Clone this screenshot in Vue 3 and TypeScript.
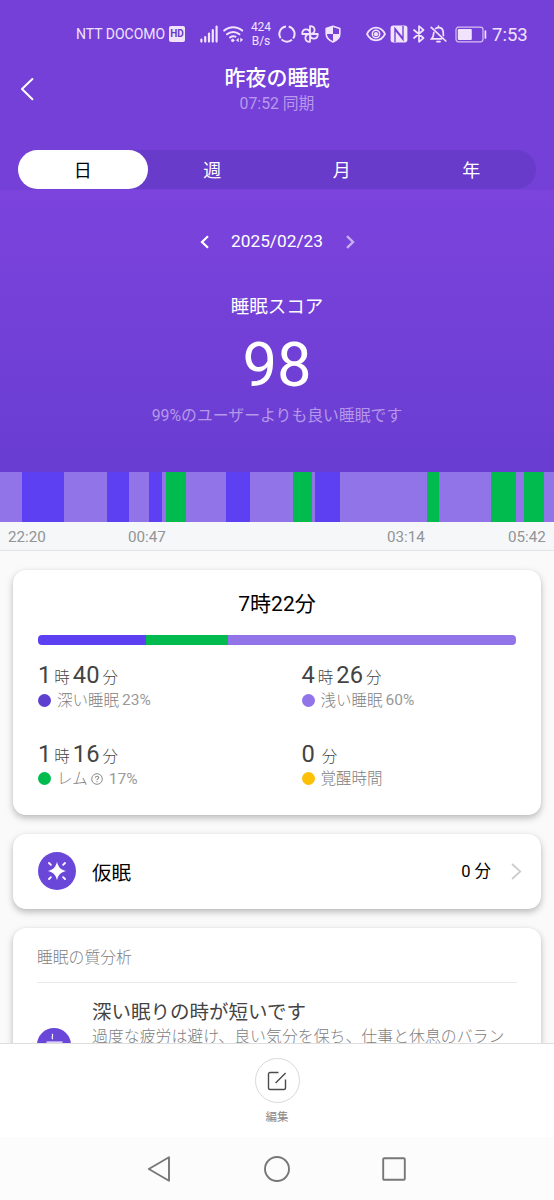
<script setup lang="ts">
type Stage = 'deep' | 'light' | 'rem'

interface Segment {
  stage: Stage
  size: number
}

interface Stat {
  parts: { value: string; unit: string }[]
  label: string
  help?: boolean
  percent?: string
  tone: string
}

const segments: Segment[] = [
  { stage: 'light', size: 22.4 },
  { stage: 'deep', size: 41.6 },
  { stage: 'light', size: 42.8 },
  { stage: 'deep', size: 22.4 },
  { stage: 'light', size: 20.2 },
  { stage: 'deep', size: 12.6 },
  { stage: 'light', size: 3.6 },
  { stage: 'rem', size: 20.2 },
  { stage: 'light', size: 40.4 },
  { stage: 'deep', size: 23.8 },
  { stage: 'light', size: 42.6 },
  { stage: 'rem', size: 19 },
  { stage: 'light', size: 3.8 },
  { stage: 'deep', size: 25 },
  { stage: 'light', size: 86.6 },
  { stage: 'rem', size: 11.6 },
  { stage: 'light', size: 52.4 },
  { stage: 'rem', size: 25.5 },
  { stage: 'light', size: 7.2 },
  { stage: 'rem', size: 20.5 },
  { stage: 'light', size: 9.8 },
]

const totals: Segment[] = [
  { stage: 'deep', size: 108 },
  { stage: 'rem', size: 82.5 },
  { stage: 'light', size: 288 },
]

const stats: Stat[] = [
  { parts: [{ value: '1', unit: '時' }, { value: '40', unit: '分' }], label: '深い睡眠', percent: '23%', tone: 'dot-deep' },
  { parts: [{ value: '4', unit: '時' }, { value: '26', unit: '分' }], label: '浅い睡眠', percent: '60%', tone: 'dot-light' },
  { parts: [{ value: '1', unit: '時' }, { value: '16', unit: '分' }], label: 'レム', help: true, percent: '17%', tone: 'dot-rem' },
  { parts: [{ value: '0', unit: '分' }], label: '覚醒時間', tone: 'dot-awake' },
]

const tabs = ['日', '週', '月', '年']
</script>

<template>
  <div class="screen">
    <header class="top">
      <div class="status">
        <span class="carrier">NTT DOCOMO</span>
        <span class="hd">HD</span>
        <svg class="signal" width="18" height="18" viewBox="0 0 18 18">
          <path d="M1.4 14.6v2M5.2 12v4.6M9 8.6v8M12.8 5.2v11.4M16.6 1.6v15" stroke="#f1e3fb" stroke-width="2.2" stroke-linecap="round" />
        </svg>
        <svg class="wifi" width="21" height="18" viewBox="0 0 21 18" fill="none" stroke="#f1e3fb" stroke-width="2" stroke-linecap="round">
          <path d="M1.2 5.6a13.5 13.5 0 0 1 18 0M4 9.3a9.4 9.4 0 0 1 12.4 0M7 12.4a5.3 5.3 0 0 1 5.4-.8" />
          <circle cx="9.7" cy="15.4" r="1.2" fill="#f1e3fb" stroke-width="1" />
          <path d="M15.7 12.7 13 15.2l2.7 2zM17.3 12.7v4.5l2.8-2.4z" fill="#f1e3fb" stroke="none" />
        </svg>
        <span class="speed"><span>424</span><span>B/s</span></span>
        <svg class="ring" width="18" height="18" viewBox="0 0 18 18" fill="none" stroke="#f1e3fb" stroke-width="2">
          <path d="M10.7 1.5a7.7 7.7 0 0 1 4.4 12M14 14.8a7.7 7.7 0 0 1-10.5-.4M2.6 13.2A7.7 7.7 0 0 1 8 1.4" />
        </svg>
        <svg class="fan" width="18" height="18" viewBox="0 0 18 18" fill="none" stroke="#f1e3fb" stroke-width="1.8" stroke-linejoin="round">
          <path d="M9 9V1.2c3.2 0 4.6 1.8 4.6 3.9S12 9 9 9ZM9 9h7.8c0 3.2-1.8 4.6-3.9 4.6S9 12 9 9ZM9 9v7.8c-3.2 0-4.6-1.8-4.6-3.9S6 9 9 9ZM9 9H1.2c0-3.2 1.8-4.6 3.900-4.6S9 6 9 9Z" />
        </svg>
        <svg class="shield" width="16" height="18" viewBox="0 0 16 18">
          <path d="M8 1.2 14.8 3.6v5.2c0 3.6-2.6 6.5-6.8 8.1C3.8 15.3 1.2 12.4 1.2 8.8V3.6Z" fill="none" stroke="#f1e3fb" stroke-width="1.6" stroke-linejoin="round" />
          <path d="M8 1.2V9H1.2V3.6ZM8 9h6.6c-.2 3.4-2.9 6.3-6.6 7.9Z" fill="#f1e3fb" />
        </svg>
        <svg class="eye" width="20" height="16" viewBox="0 0 20 16" fill="none" stroke="#f1e3fb">
          <path d="M1 8C3 4 6.2 1.7 10 1.7S17 4 19 8c-2 4-5.2 6.3-9 6.3S3 12 1 8Z" stroke-width="1.7" />
          <circle cx="10" cy="8" r="3.7" stroke-width="1.5" />
          <circle cx="10" cy="8.2" r="2.1" fill="#f1e3fb" stroke="none" />
        </svg>
        <svg class="nfc" width="18" height="18" viewBox="0 0 18 18">
          <rect x=".6" y=".6" width="16.8" height="16.8" rx="2.6" fill="#f1e3fb" />
          <path d="M5 17V3.6L12.6 13M13 1v13.4L5.4 5" fill="none" stroke="#7440d8" stroke-width="1.4" />
        </svg>
        <svg class="bt" width="12" height="18" viewBox="0 0 12 18" fill="none" stroke="#f1e3fb" stroke-width="1.7" stroke-linejoin="round" stroke-linecap="round">
          <path d="M1 5l9.500 8L6 16.8V1.2L10.5 5 1 13" />
        </svg>
        <svg class="bell" width="17" height="18" viewBox="0 0 17 18" fill="none" stroke="#f1e3fb" stroke-width="1.7" stroke-linecap="round">
          <path d="M1.2 2.4 15.8 16M3.8 7.5c-.1 3.2-.4 4.6-2.2 6.3h9.800M5.6 3.6C6.4 3 7.2 2.7 8.5 2.7c3 0 4.6 1.9 4.700 4.6l.2 3.4M8.5 1v1.5" />
          <path d="M7 16.7h3" />
        </svg>
        <svg class="battery" width="32" height="17" viewBox="0 0 32 17">
          <rect x="1" y="1.2" width="27" height="14.6" rx="2.5" fill="none" stroke="#d9bff4" stroke-width="1.2" />
          <rect x="2.8" y="3" width="14" height="11" rx="1" fill="#f1e3fb" />
          <path d="M30.4 5v7" stroke="#f1e3fb" stroke-width="1.7" stroke-linecap="round" />
        </svg>
        <span class="clock">7:53</span>
      </div>

      <div class="title-bar">
        <svg class="back" width="14" height="24" viewBox="0 0 14 24" fill="none" stroke="#fff" stroke-width="2" stroke-linecap="round" stroke-linejoin="round">
          <path d="M12.4 2 2 12l10.4 10.3" />
        </svg>
        <div class="titles">
          <h1>昨夜の睡眠</h1>
          <p>07:52 同期</p>
        </div>
      </div>

      <nav class="tabs">
        <span v-for="(tab, i) in tabs" :key="tab" class="tab" :class="{ active: i === 0 }">{{ tab }}</span>
      </nav>
    </header>

    <section class="score">
      <div class="date">
        <svg width="10" height="14" viewBox="0 0 10 14" fill="none" stroke="#fff" stroke-width="2.2"><path d="M8 1.2 2 7l6 5.8" /></svg>
        <span>2025/02/23</span>
        <svg width="10" height="14" viewBox="0 0 10 14" fill="none" stroke="#c9aef0" stroke-width="2.4"><path d="M2 1.2 8 7l-6 5.8" /></svg>
      </div>
      <p class="score-label">睡眠スコア</p>
      <p class="score-value">98</p>
      <p class="score-note">99%のユーザーよりも良い睡眠です</p>
    </section>

    <div class="chart">
      <span v-for="(s, i) in segments" :key="i" :class="s.stage" :style="{ flexGrow: s.size }"></span>
    </div>
    <div class="axis">
      <span>22:20</span>
      <span class="t2">00:47</span>
      <span class="t3">03:14</span>
      <span class="t4">05:42</span>
    </div>

    <main class="content">
      <section class="card summary">
        <h2>7時22分</h2>
        <div class="total">
          <span v-for="t in totals" :key="t.stage" :class="t.stage" :style="{ flexGrow: t.size }"></span>
        </div>
        <div class="stats">
          <div v-for="s in stats" :key="s.label" class="stat">
            <div class="amount" :class="{ single: s.parts.length === 1 }">
              <template v-for="p in s.parts" :key="p.unit"><b>{{ p.value }}</b><i>{{ p.unit }}</i></template>
            </div>
            <div class="legend">
              <span class="dot" :class="s.tone"></span>
              <span class="name">{{ s.label }}</span>
              <svg v-if="s.help" class="help" width="12" height="12" viewBox="0 0 12 12" fill="none" stroke="#8c8c8c">
                <circle cx="6" cy="6" r="5.3" />
                <path d="M4.4 4.8c0-2.1 3.3-2.1 3.3-.1C7.7 5.9 6 5.8 6 7.2M6 8.2v1.1" stroke-width="1.1" />
              </svg>
              <span v-if="s.percent" class="pct">{{ s.percent }}</span>
            </div>
          </div>
        </div>
      </section>

      <section class="card nap">
        <svg width="38" height="38" viewBox="0 0 38 38">
          <circle cx="19" cy="19" r="19" fill="#6a47d9" />
          <path d="M19 9.8c1.4 5.6 3.6 7.8 9.2 9.2-5.6 1.4-7.8 3.6-9.2 9.2-1.4-5.6-3.6-7.8-9.2-9.2 5.6-1.4 7.8-3.6 9.2-9.2Z" fill="#fff" />
          <path d="M11 11l1.9 1.9M27 11l-1.9 1.9M11 27l1.9-1.9M27 27l-1.9-1.9" stroke="#fff" stroke-width="1.8" stroke-linecap="round" />
        </svg>
        <span class="nap-name">仮眠</span>
        <span class="nap-value">0 分</span>
        <svg width="11" height="17" viewBox="0 0 11 17" fill="none" stroke="#ccc" stroke-width="1.7"><path d="M1 1l8.300 7.5L1 16" /></svg>
      </section>

      <section class="card analysis">
        <h3>睡眠の質分析</h3>
        <div class="advice">
          <svg width="34" height="34" viewBox="0 0 34 34">
            <circle cx="17" cy="17" r="17" fill="#6a47d9" />
            <path d="M15 6c2.200 1.600-1.400 2.600.8 5.200M9.500 14.200h16" fill="none" stroke="#fff" stroke-width="1.2" />
          </svg>
          <div>
            <h4>深い眠りの時が短いです</h4>
            <p>過度な疲労は避け、良い気分を保ち、仕事と休息のバラン</p>
          </div>
        </div>
      </section>
    </main>

    <footer class="actions">
      <span class="edit">
        <svg width="20" height="20" viewBox="0 0 20 20" fill="none" stroke="#4c4c4c" stroke-width="1.4">
          <path d="M11.5 1.5H3A1.5 1.5 0 0 0 1.5 3v14A1.5 1.5 0 0 0 3 18.5h14a1.5 1.5 0 0 0 1.5-1.5V8.500M8.6 12 18.6 2" />
        </svg>
      </span>
      <span class="edit-label">編集</span>
    </footer>

    <div class="sysnav">
      <svg width="24" height="26" viewBox="0 0 24 26" fill="none" stroke="#777" stroke-width="1.9" stroke-linejoin="round"><path d="M22 1.3v23.4L1.8 13Z" /></svg>
      <svg width="26" height="26" viewBox="0 0 26 26" fill="none" stroke="#777" stroke-width="1.9"><circle cx="13" cy="13" r="12" /></svg>
      <svg width="24" height="24" viewBox="0 0 24 24" fill="none" stroke="#777" stroke-width="1.9"><rect x="1.2" y="1.2" width="21.6" height="21.6" rx="1" /></svg>
    </div>
  </div>
</template>

<style>
body {
  margin: 0;
}
</style>

<style scoped>
.screen {
  width: 554px;
  height: 1200px;
  overflow: hidden;
  display: flex;
  flex-direction: column;
  background: #fafafa;
  font-family: Roboto, "Noto Sans CJK JP", sans-serif;
}
h1, h2, h3, h4, p {
  margin: 0;
  font-weight: 400;
}
svg {
  display: block;
  flex: none;
}
.top {
  flex: none;
  height: 190px;
  background: #7440d8;
  color: #fff;
}
.status {
  height: 68px;
  display: flex;
  align-items: center;
  padding-left: 76px;
  color: #f1e3fb;
  white-space: nowrap;
}
.carrier {
  width: 93px;
  font-size: 14px;
}
.hd {
  width: 16px;
  height: 16px;
  border-radius: 2px;
  background: #f1e3fb;
  color: #6a3bc8;
  font-size: 10px;
  font-weight: 700;
  line-height: 16.5px;
  text-align: center;
}
.signal { margin-left: 15px; }
.wifi { margin-left: 5px; }
.speed {
  width: 22px;
  margin-left: 6px;
  display: flex;
  flex-direction: column;
  align-items: center;
  font-size: 12px;
  line-height: 14.5px;
}
.ring { margin-left: 6px; }
.fan { margin-left: 5px; }
.shield { margin-left: 6px; }
.eye { margin-left: 25px; }
.nfc { margin-left: 4px; }
.bt { margin-left: 5px; }
.bell { margin-left: 5px; }
.battery { margin-left: 8px; }
.clock {
  margin-left: 5px;
  padding-top: 1px;
  font-size: 18.5px;
  line-height: 20px;
}
.title-bar {
  height: 82px;
  display: grid;
  grid-template-columns: 60px 1fr 60px;
}
.back {
  margin: 8.5px 0 0 20px;
}
.titles {
  text-align: center;
}
h1 {
  margin-top: -4px;
  font-size: 21px;
  font-weight: 500;
  line-height: 28px;
}
.titles p {
  margin-top: 2px;
  font-size: 15.8px;
  line-height: 20px;
  color: #b999ec;
}
.tabs {
  display: flex;
  margin: 0 18px;
  height: 39px;
  border-radius: 20px;
  background: #693bca;
}
.tab {
  flex: 1;
  border-radius: 20px;
  text-align: center;
  font-size: 18px;
  line-height: 41px;
}
.tab.active {
  background: #fff;
  color: #000;
}
.score {
  flex: none;
  height: 282px;
  background: linear-gradient(#7c43dd, #693dd1);
  color: #fff;
  text-align: center;
}
.date {
  display: flex;
  align-items: center;
  justify-content: center;
  gap: 21px;
  padding-top: 41px;
  height: 21px;
  font-size: 17.3px;
  line-height: 21px;
}
.date svg {
  margin-top: 1px;
}
.date span {
  width: 93px;
  white-space: nowrap;
}
.score-label {
  margin-top: 41px;
  font-size: 18.5px;
  line-height: 28px;
}
.score-value {
  margin-top: 11px;
  font-size: 61.5px;
  line-height: 66px;
}
.score-note {
  margin-top: 6px;
  font-size: 15.85px;
  line-height: 24px;
  color: #b598e9;
}
.chart {
  flex: none;
  height: 50px;
  display: flex;
}
.chart span,
.total span {
  flex-basis: 0;
}
.deep { background: #5e40f3; }
.light { background: #9074e8; }
.rem { background: #02bb4f; }
.axis {
  flex: none;
  height: 28px;
  display: flex;
  padding: 0 8px;
  border-bottom: 1px solid #e3e4e6;
  background: #f5f7f9;
  color: #929496;
  font-size: 15.2px;
  line-height: 31px;
}
.axis span { width: 38px; }
.axis .t2 { margin-left: 82px; }
.axis .t3 { margin-left: 221px; }
.axis .t4 { margin-left: auto; }
.content {
  flex: 1;
  min-height: 0;
  overflow: hidden;
  padding: 19px 13px 0 13px;
  display: flex;
  flex-direction: column;
  gap: 18.5px;
}
.card {
  flex: none;
  box-sizing: border-box;
  border-radius: 13px;
  background: #fff;
  box-shadow: 0 3px 7px rgba(0, 0, 0, 0.26), 0 0 2px rgba(0, 0, 0, 0.05);
}
.summary {
  height: 245px;
  padding: 17.5px 25px 0;
}
h2 {
  text-align: center;
  font-size: 21px;
  line-height: 32px;
}
.total {
  display: flex;
  height: 10px;
  margin-top: 15.5px;
  border-radius: 4px;
  overflow: hidden;
}
.stats {
  display: grid;
  grid-template-columns: 263.5px 1fr;
  grid-auto-rows: 78.5px;
  margin-top: 13px;
}
.amount {
  display: flex;
  align-items: baseline;
  height: 34px;
  line-height: 34px;
  color: #444;
}
.amount b {
  font-size: 23.7px;
  font-weight: 400;
}
.amount i {
  margin: 0 3px 0 3px;
  font-style: normal;
  font-size: 15.5px;
  font-weight: 300;
  color: #444;
}
.amount.single i {
  margin-left: 7px;
}
.legend {
  display: flex;
  align-items: center;
  height: 20px;
  margin-top: -2px;
  color: #999;
  font-size: 15.5px;
  line-height: 20px;
}
.name {
  padding-top: 1px;
  font-weight: 300;
  color: #808080;
}
.dot {
  width: 13px;
  height: 13px;
  margin-right: 6px;
  border-radius: 50%;
}
.dot-deep { background: #5e3fd0; }
.dot-light { background: #9074e8; }
.dot-rem { background: #02bb4f; }
.dot-awake { background: #fcc006; }
.help { margin: 0 3px 0 3px; }
.pct { margin-left: 3px; }
.nap {
  height: 75.5px;
  padding: 0 19px 0 25px;
  display: flex;
  align-items: center;
  color: #000;
}
.nap-name {
  margin-left: 16px;
  font-size: 19.5px;
}
.nap-value {
  margin-left: auto;
  margin-right: 20px;
  font-size: 16.5px;
  line-height: 24px;
  padding-top: 1px;
}
.analysis {
  height: 230px;
  padding: 17.5px 24px 0;
}
h3 {
  padding-bottom: 11px;
  border-bottom: 1.5px solid #eaeaea;
  font-size: 15.8px;
  font-weight: 300;
  line-height: 26px;
  color: #808080;
}
.advice {
  display: grid;
  grid-template-columns: 55px 1fr;
  padding-top: 16px;
}
.advice svg {
  margin-top: 28.5px;
}
h4 {
  font-size: 19.5px;
  line-height: 28px;
  color: #444;
}
.advice p {
  font-size: 15.9px;
  font-weight: 300;
  line-height: 20px;
  color: #808080;
  white-space: nowrap;
}
.actions {
  flex: none;
  box-sizing: border-box;
  height: 94px;
  padding-top: 14px;
  display: flex;
  flex-direction: column;
  align-items: center;
  border-top: 1px solid #dedede;
  background: #fff;
}
.edit {
  width: 43px;
  height: 43px;
  display: grid;
  place-items: center;
  border: 1px solid #d9d9d9;
  border-radius: 50%;
}
.edit-label {
  margin-top: 5px;
  font-size: 11.5px;
  line-height: 18px;
  color: #888;
}
.sysnav {
  flex: none;
  height: 63px;
  padding: 0 148px 0 147px;
  display: flex;
  align-items: center;
  justify-content: space-between;
  background: #fcfcfc;
}
</style>
